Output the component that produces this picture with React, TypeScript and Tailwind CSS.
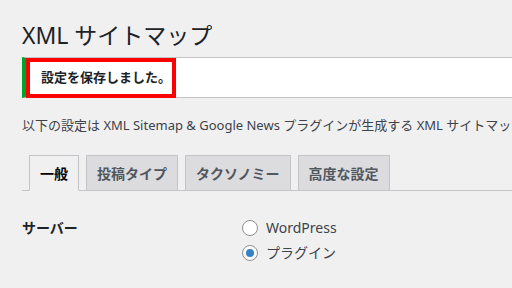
import React from 'react';

const TABS = ['一般', '投稿タイプ', 'タクソノミー', '高度な設定'];

function Radio({ checked }: { checked?: boolean }) {
  return (
    <span className="w-4 h-4 rounded-full border border-[#8c8f94] bg-white flex items-center justify-center shrink-0">
      {checked && <span className="w-2 h-2 rounded-full bg-[#3582c4]" />}
    </span>
  );
}

export default function App() {
  return (
    <div className="w-[512px] h-[288px] overflow-hidden bg-[#f0f0f1] font-['Noto_Sans','Noto_Sans_CJK_JP',sans-serif] text-[#3c434a]">
      <div className="w-[640px] pl-[22px]">
        <h1 className="mt-[20px] h-[30px] leading-[30px] text-[23px] font-normal text-[#1d2327] whitespace-nowrap">
          XML サイトマップ
        </h1>

        <div className="relative mt-[7px] h-[41px] flex items-center bg-white border border-[#c3c4c7] border-l-4 border-l-[#00a32a] pl-[15px]">
          <p className="text-[13px] font-semibold text-[#1d2327]">設定を保存しました。</p>
          <div className="absolute left-0 top-0 -bottom-px w-[150px] border-4 border-[#ff0000]" />
        </div>

        <p className="mt-[17px] h-[20px] leading-[20px] text-[13px] whitespace-nowrap">
          以下の設定は XML Sitemap &amp; Google News プラグインが生成する XML サイトマップにのみ適用されます。
        </p>

        <div className="mt-[20px] flex border-b border-[#c3c4c7]">
          {TABS.map((t, i) => (
            <div
              key={t}
              className={`ml-[7px] -mb-px h-[36px] px-[10px] flex items-center border text-[14px] font-semibold whitespace-nowrap ${
                i === 0
                  ? 'bg-[#f0f0f1] border-[#c3c4c7] border-b-[#f0f0f1] text-[#000]'
                  : 'bg-[#dcdcde] border-[#c3c4c7] text-[#50575e]'
              }`}
            >
              {t}
            </div>
          ))}
        </div>

        <div className="mt-[24px] flex">
          <div className="w-[220px] h-[25px] flex items-center text-[14px] font-semibold text-[#1d2327]">
            サーバー
          </div>
          <div className="flex flex-col text-[14px]">
            <label className="h-[25px] flex items-center gap-2">
              <Radio />
              <span>WordPress</span>
            </label>
            <label className="h-[25px] flex items-center gap-2">
              <Radio checked />
              <span>プラグイン</span>
            </label>
          </div>
        </div>
      </div>
    </div>
  );
}
